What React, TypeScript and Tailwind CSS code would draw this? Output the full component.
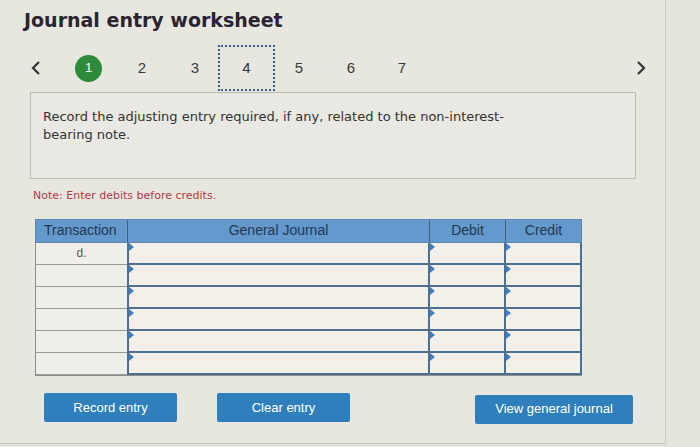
import React from 'react';

const ROWS = ['d.', '', '', '', '', ''];

function Marker() {
  return (
    <span className="absolute left-0 top-0 w-0 h-0 border-t-[4px] border-b-[4px] border-l-[5px] border-t-transparent border-b-transparent border-l-[#3f7fc0]" />
  );
}

function Chevron({ dir }: { dir: 'left' | 'right' }) {
  return (
    <svg width="12" height="16" viewBox="0 0 12 16" className="text-[#333]">
      <path d={dir === 'left' ? 'M9 2 L3 8 L9 14' : 'M3 2 L9 8 L3 14'} fill="none" stroke="currentColor" strokeWidth="2.2" />
    </svg>
  );
}

export default function App() {
  const num = "w-[10px] text-center text-[15px] font-['Liberation_Sans',sans-serif] text-[#3a3a3a]";
  return (
    <div className="w-[700px] h-[447px] bg-[#e4e3dc] overflow-hidden font-['DejaVu_Sans',sans-serif] text-[#2b2b2b] flex">
      <div className="w-[666px] h-[444px] border-r border-b border-[#c9c8c0] bg-[#e7e6df] flex flex-col">
        {/* title */}
        <h1 className="pl-[24px] pt-[8px] text-[19px] font-bold text-[#2a2430] leading-[24px]">Journal entry worksheet</h1>

        {/* pager */}
        <div className="flex items-center h-[48px] mt-[12px] pl-[30px] pr-[18px]">
          <Chevron dir="left" />
          <span className="ml-[33px] w-[27px] h-[27px] rounded-full bg-[#2e8b3a] text-white text-[13px] flex items-center justify-center font-['Liberation_Sans',sans-serif]">1</span>
          <span className={`ml-[35px] ${num}`}>2</span>
          <span className={`ml-[43px] ${num}`}>3</span>
          <span className="ml-[18px] w-[57px] h-[46px] border-2 border-dotted border-[#3a5a8a] flex items-center justify-center text-[15px] font-['Liberation_Sans',sans-serif] text-[#333]">4</span>
          <span className={`ml-[19px] ${num}`}>5</span>
          <span className={`ml-[42px] ${num}`}>6</span>
          <span className={`ml-[41px] ${num}`}>7</span>
          <span className="ml-auto"><Chevron dir="right" /></span>
        </div>

        {/* instruction */}
        <div className="ml-[30px] w-[606px] h-[87px] border border-[#bdbcb5] bg-[#e9e8e2] px-[12px] pt-[15px] text-[13px] leading-[18px] text-[#333]">
          Record the adjusting entry required, if any, related to the non-interest-<br />bearing note.
        </div>

        <p className="ml-[33px] mt-[9px] text-[11px] text-[#b23a48]">Note: Enter debits before credits.</p>

        {/* table */}
        <div className="ml-[35px] mt-[14px] w-[547px] font-['Liberation_Sans',sans-serif]">
          <div className="flex h-[24px] bg-[#6399cc] text-[#23384f] text-[14px] border border-[#5c86ad]">
            <div className="w-[92px] border-r border-[#3e5f80] flex items-center pl-[8px]">Transaction</div>
            <div className="w-[302px] border-r border-[#3e5f80] flex items-center justify-center">General Journal</div>
            <div className="w-[76px] border-r border-[#3e5f80] flex items-center justify-center">Debit</div>
            <div className="flex-1 flex items-center justify-center">Credit</div>
          </div>
          <div className="border-l border-b border-[#8d8d8a]">
            {ROWS.map((r, i) => (
              <div key={i} className="flex h-[22px]">
                <div className="w-[91px] border-b border-[#9a9a96] bg-[#efeee9] text-[12px] text-[#555] flex items-center justify-center">{r}</div>
                <div className="relative w-[303px] border-x-2 border-b-2 border-[#4d6f90] bg-[#f2f0e8]"><Marker /></div>
                <div className="relative w-[76px] border-r-2 border-b-2 border-[#4d6f90] bg-[#f2f0e8]"><Marker /></div>
                <div className="relative flex-1 border-r-2 border-b-2 border-[#4d6f90] bg-[#f2f0e8]"><Marker /></div>
              </div>
            ))}
          </div>
        </div>

        {/* buttons */}
        <div className="flex items-center mt-[16px] ml-[44px] font-['Liberation_Sans',sans-serif] text-[13px] text-white">
          <button className="w-[133px] h-[29px] bg-[#2f7fbd] rounded-[2px]">Record entry</button>
          <button className="ml-[40px] w-[133px] h-[29px] bg-[#2f7fbd] rounded-[2px]">Clear entry</button>
          <button className="ml-[125px] mt-[3px] w-[158px] h-[29px] bg-[#2f7fbd] rounded-[2px]">View general journal</button>
        </div>
      </div>
    </div>
  );
}
